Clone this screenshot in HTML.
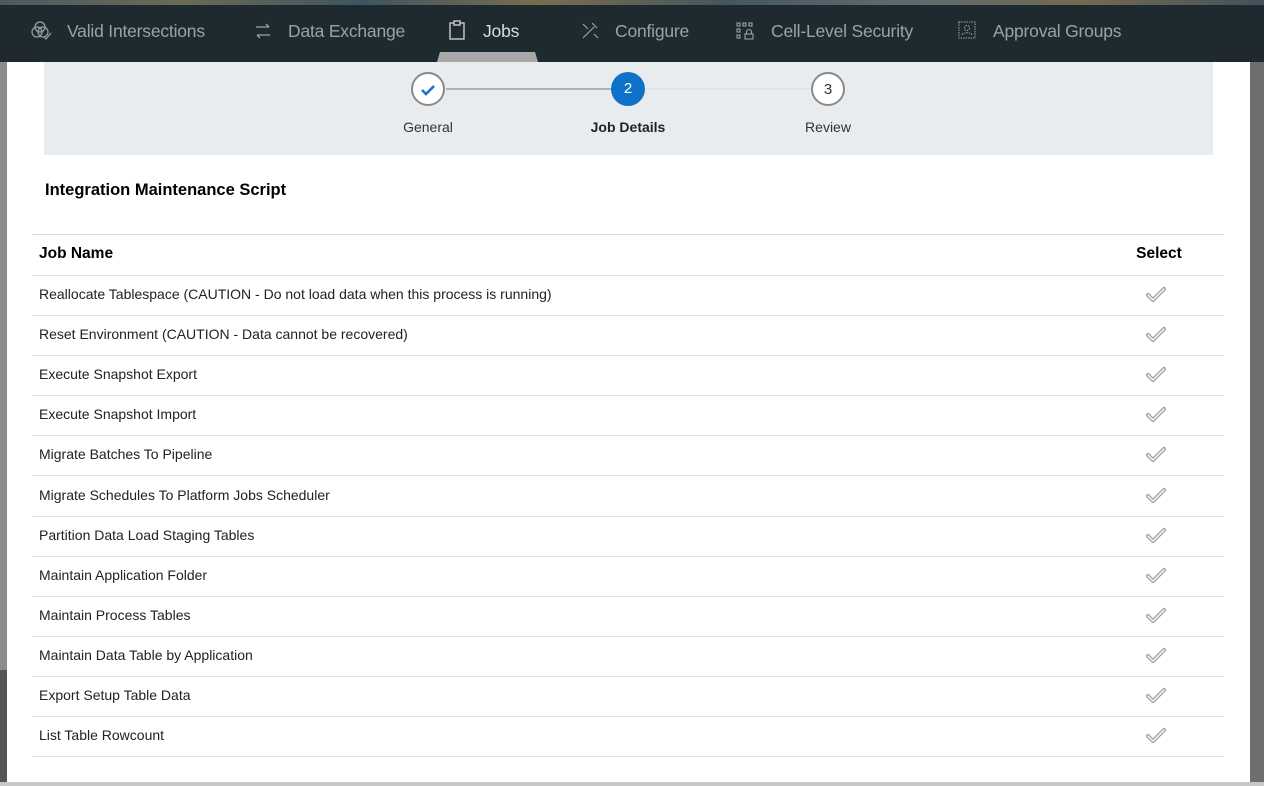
<!DOCTYPE html>
<html><head><meta charset="utf-8"><style>
*{margin:0;padding:0;box-sizing:border-box}
body{width:1264px;height:786px;overflow:hidden;position:relative;font-family:"Liberation Sans",sans-serif;background:#6e6e6e}
.abs{position:absolute}
#nav{left:0;top:0;width:1264px;height:62px;background:#1f2a30}
#strip{left:0;top:0;width:1264px;height:5px;background:linear-gradient(90deg,#4a5a60,#6b6a55,#3e5560,#7a6d4e,#44565e,#5c6b70,#746a50,#42525a)}
.tab{position:absolute;top:21px;font-size:17.5px;color:#9aa2a6;white-space:nowrap;letter-spacing:-0.2px}
.ico{position:absolute;top:20px}
#dlg{left:7px;top:62px;width:1243px;height:720px;background:#fff}
#leftbg{left:0;top:62px;width:7px;height:724px;background:#8c8c8c}
#leftbg2{left:0;top:670px;width:7px;height:116px;background:#555}
#bot{left:0;top:782px;width:1264px;height:4px;background:#c8c8c8}
#step{left:44px;top:62px;width:1169px;height:93px;background:#e8ecee}
.circ{position:absolute;width:34px;height:34px;border-radius:50%;top:72px;text-align:center;line-height:31px;font-size:15px}
.lbl{position:absolute;top:119px;font-size:14px;color:#333;text-align:center;width:120px}
table{position:absolute;left:32px;top:234px;width:1192px;border-collapse:collapse;font-size:14px;color:#222}
td,th{height:40.1px;border-bottom:1px solid #dfe3e6;padding-left:7px;text-align:left;padding-bottom:3px}
th{font-size:15.5px;font-weight:bold;color:#000;border-top:1px solid #d6dbde;height:41px;padding-bottom:2px}
td.s,th.s{text-align:center;padding-left:0;width:130px}
td.s svg{display:block;margin:0 auto;position:relative;left:-3px}
</style></head><body>
<div id="nav" class="abs"></div><div id="strip" class="abs"></div>
<svg class="ico" style="left:31px" width="22" height="22" viewBox="0 0 22 22" fill="none" stroke="#9aa2a6" stroke-width="1.2"><circle cx="9" cy="7" r="5"/><circle cx="6" cy="12" r="5"/><circle cx="12" cy="12" r="5"/><path d="M13 17l2 2 5-6"/></svg>
<div class="tab" style="left:67px">Valid Intersections</div>
<svg class="ico" style="left:254px" width="18" height="22" viewBox="0 0 18 22" fill="none" stroke="#9aa2a6" stroke-width="1.3"><path d="M2 7h13M12 4l3 3M16 15H3M6 18l-3-3"/></svg>
<div class="tab" style="left:288px">Data Exchange</div>
<svg class="ico" style="left:448px;top:19px" width="20" height="22" viewBox="0 0 20 22" fill="none" stroke="#c8cdd0" stroke-width="1.4"><rect x="2" y="4" width="14" height="16"/><rect x="6" y="2" width="6" height="4" fill="#1f2a30"/></svg>
<div class="tab" style="left:483px;color:#d8dcde">Jobs</div>
<svg class="abs" style="left:437px;top:52px" width="101" height="10"><path d="M3 0H98L101 10H0Z" fill="#a8a8a8"/></svg>
<svg class="ico" style="left:580px" width="20" height="22" viewBox="0 0 20 22" fill="none" stroke="#9aa2a6" stroke-width="1.2"><path d="M3 18L14 7M12 3l5 5M3 4l5 5M14 14l4 4"/></svg>
<div class="tab" style="left:615px">Configure</div>
<svg class="ico" style="left:736px" width="20" height="22" viewBox="0 0 20 22" fill="none" stroke="#9aa2a6" stroke-width="1.1"><rect x="1" y="3" width="3" height="3"/><rect x="7" y="3" width="3" height="3"/><rect x="13" y="3" width="3" height="3"/><rect x="1" y="9" width="3" height="3"/><rect x="1" y="15" width="3" height="3"/><rect x="9" y="14" width="8" height="5"/><path d="M10.5 14v-2a2.5 2.5 0 0 1 5 0v2"/></svg>
<div class="tab" style="left:771px">Cell-Level Security</div>
<svg class="ico" style="left:958px" width="20" height="22" viewBox="0 0 20 22" fill="none" stroke="#9aa2a6" stroke-width="1" stroke-dasharray="1.5 1"><rect x="1" y="2" width="16" height="16"/><circle cx="9" cy="8" r="2.5"/><path d="M4 15c1-3 9-3 10 0"/></svg>
<div class="tab" style="left:993px">Approval Groups</div>

<div id="leftbg" class="abs"></div><div id="leftbg2" class="abs"></div>
<div id="dlg" class="abs"></div>
<div id="bot" class="abs"></div>
<div id="step" class="abs"></div>
<div class="abs" style="left:446px;top:88px;width:166px;height:2px;background:#a9b3bb"></div>
<div class="abs" style="left:646px;top:88px;width:166px;height:2px;background:#dfe4e7"></div>
<div class="circ" style="left:411px;border:2px solid #8a8a8a;background:#fff"><svg width="18" height="18" viewBox="0 0 18 18" style="margin-top:7px"><path d="M3 9l4 4 8-8" fill="none" stroke="#1a73c8" stroke-width="2.6"/></svg></div>
<div class="circ" style="left:611px;background:#0d72c8;color:#fff;line-height:34px">2</div>
<div class="circ" style="left:811px;border:2px solid #8a8a8a;background:#fff;color:#333">3</div>
<div class="lbl" style="left:368px">General</div>
<div class="lbl" style="left:568px;font-weight:bold;color:#222">Job Details</div>
<div class="lbl" style="left:768px">Review</div>
<div class="abs" style="left:45px;top:181px;font-size:16.5px;font-weight:bold;color:#000">Integration Maintenance Script</div>
<svg width="0" height="0" style="position:absolute"><defs><symbol id="ck" viewBox="0 0 20 16"><path d="M2 9l5 5L18 3" fill="none" stroke="#9c9c9c" stroke-width="4" stroke-linejoin="round" stroke-linecap="round"/><path d="M2 9l5 5L18 3" fill="none" stroke="#f2f2f2" stroke-width="1.6" stroke-linejoin="round" stroke-linecap="round"/></symbol></defs></svg>
<table>
<tr><th>Job Name</th><th class="s">Select</th></tr>
<tr><td>Reallocate Tablespace (CAUTION - Do not load data when this process is running)</td><td class="s"><svg width="20" height="16"><use href="#ck"/></svg></td></tr>
<tr><td>Reset Environment (CAUTION - Data cannot be recovered)</td><td class="s"><svg width="20" height="16"><use href="#ck"/></svg></td></tr>
<tr><td>Execute Snapshot Export</td><td class="s"><svg width="20" height="16"><use href="#ck"/></svg></td></tr>
<tr><td>Execute Snapshot Import</td><td class="s"><svg width="20" height="16"><use href="#ck"/></svg></td></tr>
<tr><td>Migrate Batches To Pipeline</td><td class="s"><svg width="20" height="16"><use href="#ck"/></svg></td></tr>
<tr><td>Migrate Schedules To Platform Jobs Scheduler</td><td class="s"><svg width="20" height="16"><use href="#ck"/></svg></td></tr>
<tr><td>Partition Data Load Staging Tables</td><td class="s"><svg width="20" height="16"><use href="#ck"/></svg></td></tr>
<tr><td>Maintain Application Folder</td><td class="s"><svg width="20" height="16"><use href="#ck"/></svg></td></tr>
<tr><td>Maintain Process Tables</td><td class="s"><svg width="20" height="16"><use href="#ck"/></svg></td></tr>
<tr><td>Maintain Data Table by Application</td><td class="s"><svg width="20" height="16"><use href="#ck"/></svg></td></tr>
<tr><td>Export Setup Table Data</td><td class="s"><svg width="20" height="16"><use href="#ck"/></svg></td></tr>
<tr><td>List Table Rowcount</td><td class="s"><svg width="20" height="16"><use href="#ck"/></svg></td></tr>
</table>
</body></html>
